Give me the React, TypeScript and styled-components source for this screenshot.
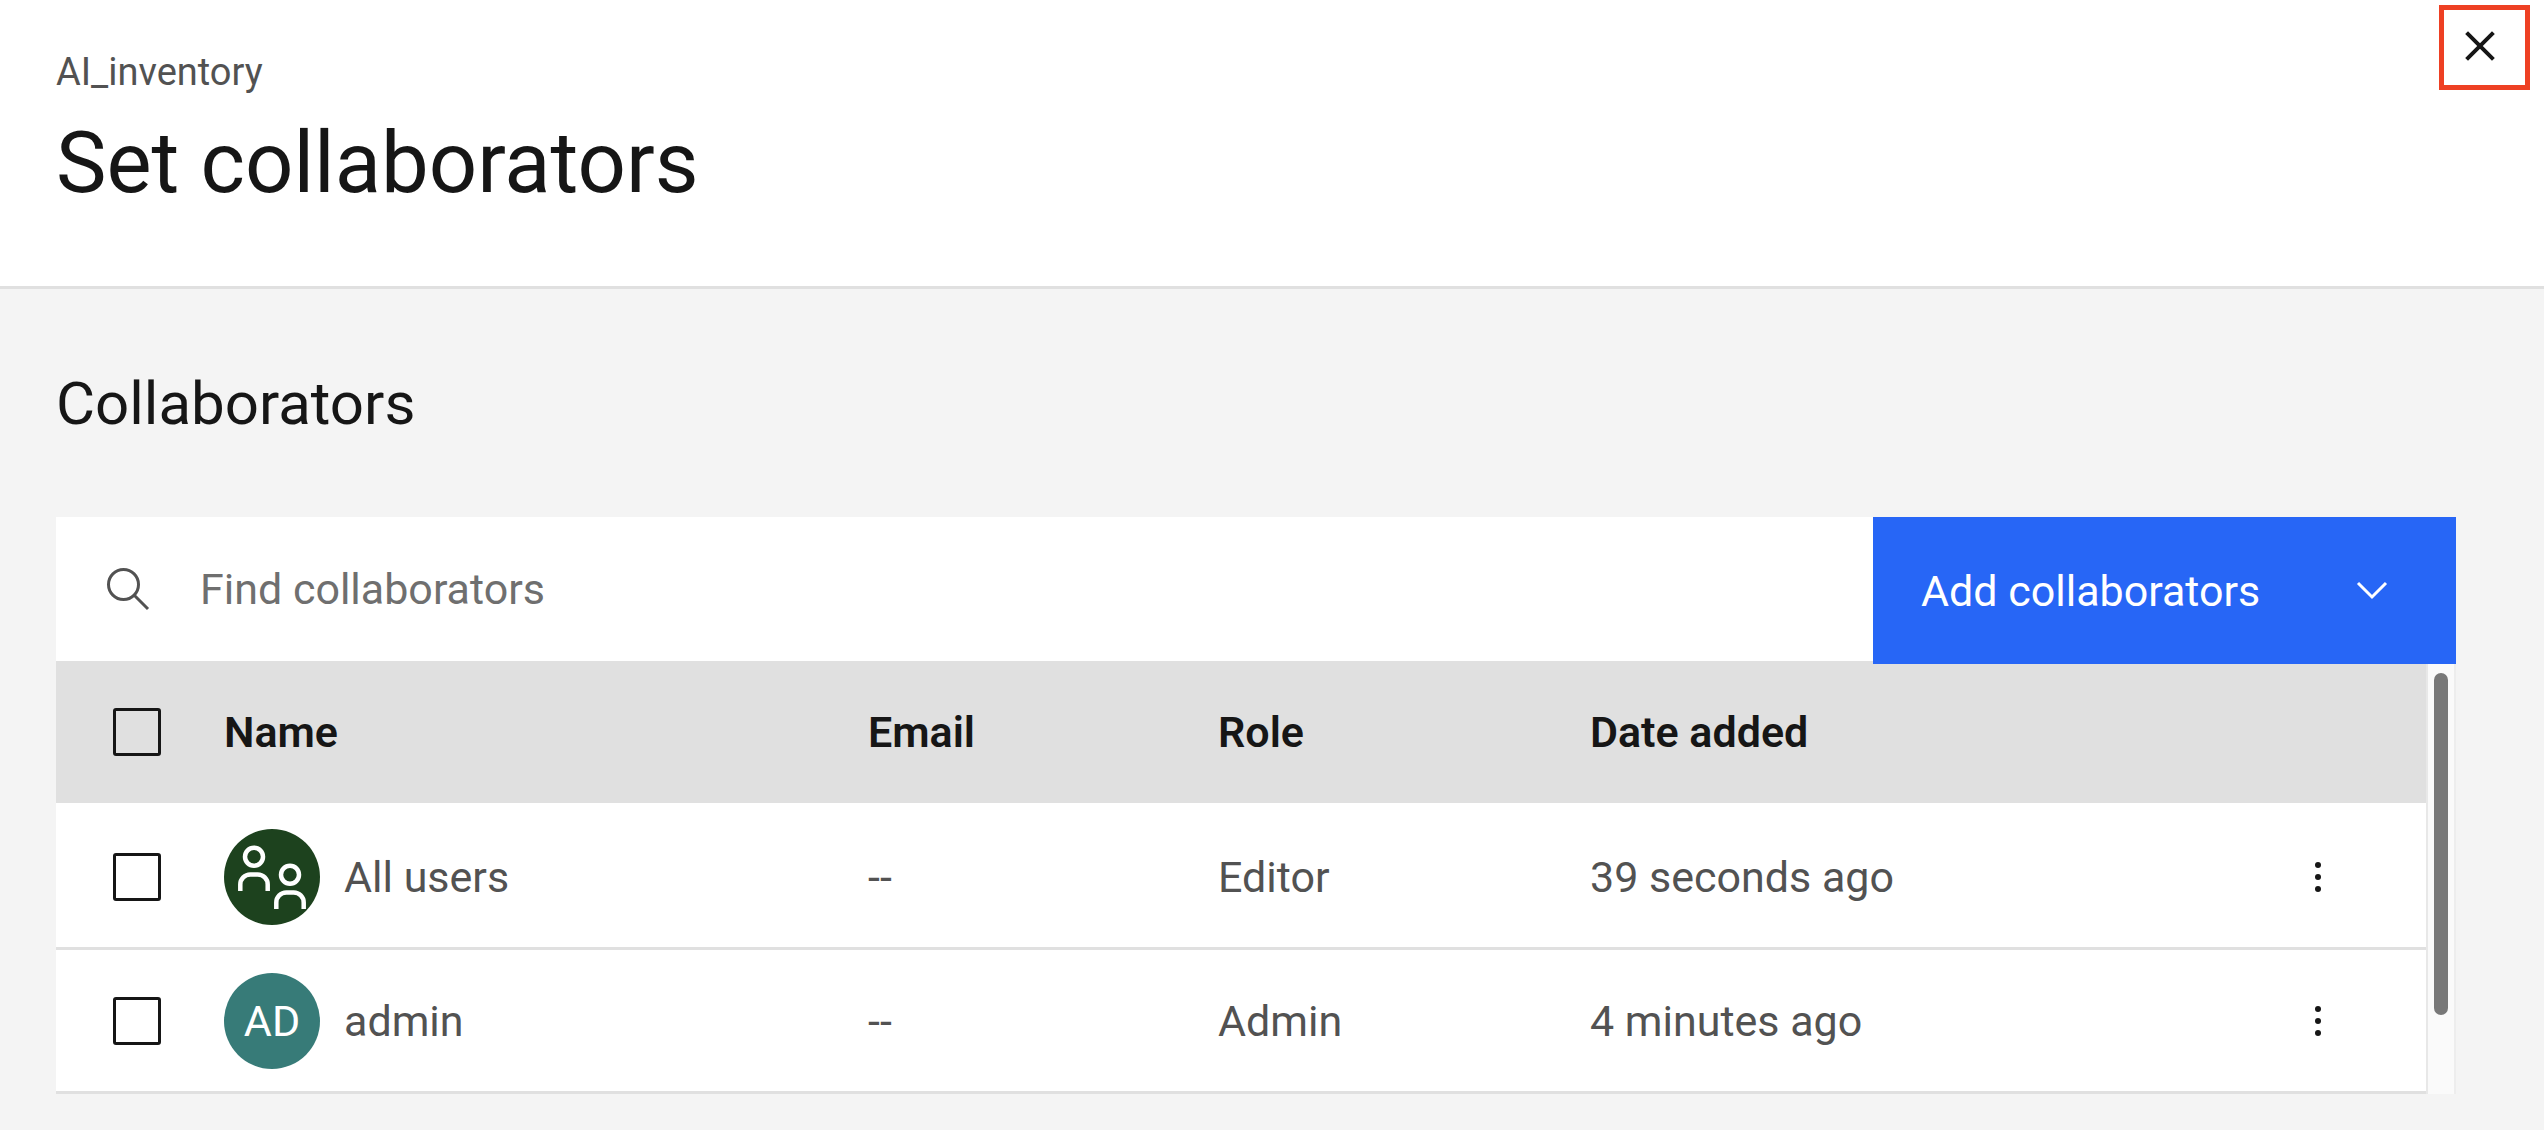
import React, { useId } from 'react';
import styled, { createGlobalStyle } from 'styled-components';

const GlobalStyle = createGlobalStyle`
  *, *::before, *::after { box-sizing: border-box; }
  html, body, #root { min-height: 100%; }
  body {
    margin: 0;
    background: #f4f4f4;
    color: #161616;
    font-family: Roboto, "Noto Sans", sans-serif;
    font-size: 43px;
    line-height: 54px;
  }
  button, input { font: inherit; }
`;

const Header = styled.header`
  display: flex;
  justify-content: space-between;
  align-items: flex-start;
  padding: 5px 14px 66px 56px;
  background: #fff;
  border-bottom: 3px solid #e0e0e0;
`;

const Heading = styled.div`
  padding-top: 43px;
`;

const Eyebrow = styled.p`
  margin: 0;
  font-size: 38px;
  line-height: 48px;
  color: #525252;
`;

const Title = styled.h1`
  margin: 10px 0 0;
  font-size: 85px;
  line-height: 114px;
  font-weight: 400;
`;

const CloseButton = styled.button`
  display: flex;
  align-items: center;
  justify-content: center;
  width: 91px;
  height: 85px;
  padding: 0 9px 3px 0;
  border: 5px solid #ee4023;
  background: #fff;
  color: #161616;
  cursor: pointer;
`;

const Main = styled.main`
  padding: 76px 88px 36px 56px;
`;

const SectionTitle = styled.h2`
  margin: 0 0 74px;
  font-size: 60px;
  line-height: 78px;
  font-weight: 400;
`;

const Toolbar = styled.div`
  display: flex;
  align-items: flex-start;
  height: 144px;
  background: #fff;
`;

const SearchField = styled.label`
  display: flex;
  flex: 1;
  align-items: center;
  gap: 48px;
  height: 100%;
  padding-left: 48px;
  color: #525252;
`;

const SearchInput = styled.input`
  flex: 1;
  min-width: 0;
  padding: 0;
  border: 0;
  outline: 0;
  background: transparent;
  color: #161616;
  &::placeholder { color: #6f6f6f; opacity: 1; }
`;

const AddButton = styled.button`
  position: relative;
  z-index: 1;
  display: flex;
  align-items: center;
  justify-content: space-between;
  width: 583px;
  height: 147px;
  padding: 0 60px 0 48px;
  border: 0;
  background: #2766f6;
  color: #fff;
  cursor: pointer;
`;

const TableArea = styled.div`
  display: flex;
`;

const Table = styled.table`
  flex: 1;
  min-width: 0;
  table-layout: fixed;
  border-collapse: separate;
  border-spacing: 0;
  text-align: left;
`;

const Column = styled.col<{ $width?: number }>`
  width: ${({ $width }) => ($width ? `${$width}px` : 'auto')};
`;

const HeadCell = styled.th`
  height: 142px;
  padding: 0;
  background: #e0e0e0;
  font-weight: 600;
`;

const Cell = styled.td`
  height: 144px;
  padding: 0;
  background: #fff;
  border-bottom: 3px solid #e0e0e0;
  color: #525252;
  tr:first-child > & {
    height: 147px;
    padding-top: 3px;
  }
`;

const Checkbox = styled.input`
  display: block;
  appearance: none;
  width: 48px;
  height: 48px;
  margin: 0 0 0 57px;
  border: 3px solid #161616;
  border-radius: 3px;
  cursor: pointer;
  &:checked { background: #161616; }
`;

const Person = styled.div`
  display: flex;
  align-items: center;
  gap: 24px;
`;

const Avatar = styled.span<{ $color: string }>`
  display: flex;
  align-items: center;
  justify-content: center;
  width: 96px;
  height: 96px;
  border-radius: 50%;
  background: ${({ $color }) => $color};
  color: #fff;
`;

const MenuButton = styled.button`
  display: flex;
  align-items: center;
  justify-content: center;
  width: 96px;
  height: 96px;
  margin: 0 auto;
  padding: 0;
  border: 0;
  background: transparent;
  color: #161616;
  cursor: pointer;
`;

const ScrollTrack = styled.div`
  width: 30px;
  padding: 12px 6px;
  border-left: 2px solid #e8e8e8;
  border-right: 2px solid #ededed;
  background: #fafafa;
`;

const ScrollThumb = styled.div`
  width: 14px;
  height: 342px;
  border-radius: 7px;
  background: #787878;
`;

const CloseIcon = () => (
  <svg width="30" height="30" viewBox="0 0 30 30" fill="none" stroke="currentColor" strokeWidth="4" aria-hidden="true">
    <path d="M1.6 1.6 28.4 28.4M28.4 1.6 1.6 28.4" />
  </svg>
);

const SearchIcon = () => (
  <svg width="48" height="48" viewBox="0 0 48 48" fill="none" stroke="currentColor" strokeWidth="3" aria-hidden="true">
    <circle cx="19.5" cy="19.5" r="15" />
    <path d="M30 30 44 44" />
  </svg>
);

const ChevronIcon = () => (
  <svg width="48" height="48" viewBox="0 0 48 48" fill="none" stroke="currentColor" strokeWidth="3" aria-hidden="true">
    <path d="M10 16 24 30 38 16" />
  </svg>
);

const GroupIcon = () => (
  <svg width="96" height="96" viewBox="0 0 96 96" fill="none" stroke="currentColor" strokeWidth="4.5" aria-hidden="true">
    <circle cx="30" cy="27.7" r="9" />
    <path d="M16.3 62V55.5A10 10 0 0 1 26.3 45.5H33.7A10 10 0 0 1 43.7 55.5V62" />
    <circle cx="66" cy="45.7" r="9" />
    <path d="M52.3 80V73.5A10 10 0 0 1 62.3 63.5H69.7A10 10 0 0 1 79.7 73.5V80" />
  </svg>
);

const MenuIcon = () => (
  <svg width="30" height="30" viewBox="0 0 30 30" fill="currentColor" aria-hidden="true">
    <circle cx="15" cy="3" r="3" />
    <circle cx="15" cy="15" r="3" />
    <circle cx="15" cy="27" r="3" />
  </svg>
);

interface Collaborator {
  name: string;
  email: string;
  role: string;
  added: string;
  color: string;
  avatar: React.ReactNode;
}

const collaborators: Collaborator[] = [
  { name: 'All users', email: '--', role: 'Editor', added: '39 seconds ago', color: '#1d421e', avatar: <GroupIcon /> },
  { name: 'admin', email: '--', role: 'Admin', added: '4 minutes ago', color: '#377b78', avatar: 'AD' },
];

export default function App() {
  const searchId = useId();
  return (
    <>
      <GlobalStyle />
      <Header>
        <Heading>
          <Eyebrow>AI_inventory</Eyebrow>
          <Title>Set collaborators</Title>
        </Heading>
        <CloseButton type="button" aria-label="Close">
          <CloseIcon />
        </CloseButton>
      </Header>
      <Main>
        <SectionTitle>Collaborators</SectionTitle>
        <Toolbar>
          <SearchField htmlFor={searchId}>
            <SearchIcon />
            <SearchInput id={searchId} type="text" placeholder="Find collaborators" aria-label="Find collaborators" />
          </SearchField>
          <AddButton type="button" aria-haspopup="menu">
            Add collaborators
            <ChevronIcon />
          </AddButton>
        </Toolbar>
        <TableArea>
          <Table>
            <colgroup>
              <Column $width={168} />
              <Column $width={644} />
              <Column $width={350} />
              <Column $width={372} />
              <Column />
              <Column $width={216} />
            </colgroup>
            <thead>
              <tr>
                <HeadCell scope="col">
                  <Checkbox type="checkbox" aria-label="Select all collaborators" />
                </HeadCell>
                <HeadCell scope="col">Name</HeadCell>
                <HeadCell scope="col">Email</HeadCell>
                <HeadCell scope="col">Role</HeadCell>
                <HeadCell scope="col">Date added</HeadCell>
                <HeadCell aria-label="Actions" />
              </tr>
            </thead>
            <tbody>
              {collaborators.map((c) => (
                <tr key={c.name}>
                  <Cell>
                    <Checkbox type="checkbox" aria-label={`Select ${c.name}`} />
                  </Cell>
                  <Cell>
                    <Person>
                      <Avatar $color={c.color}>{c.avatar}</Avatar>
                      {c.name}
                    </Person>
                  </Cell>
                  <Cell>{c.email}</Cell>
                  <Cell>{c.role}</Cell>
                  <Cell>{c.added}</Cell>
                  <Cell>
                    <MenuButton type="button" aria-label={`Actions for ${c.name}`}>
                      <MenuIcon />
                    </MenuButton>
                  </Cell>
                </tr>
              ))}
            </tbody>
          </Table>
          <ScrollTrack>
            <ScrollThumb />
          </ScrollTrack>
        </TableArea>
      </Main>
    </>
  );
}
